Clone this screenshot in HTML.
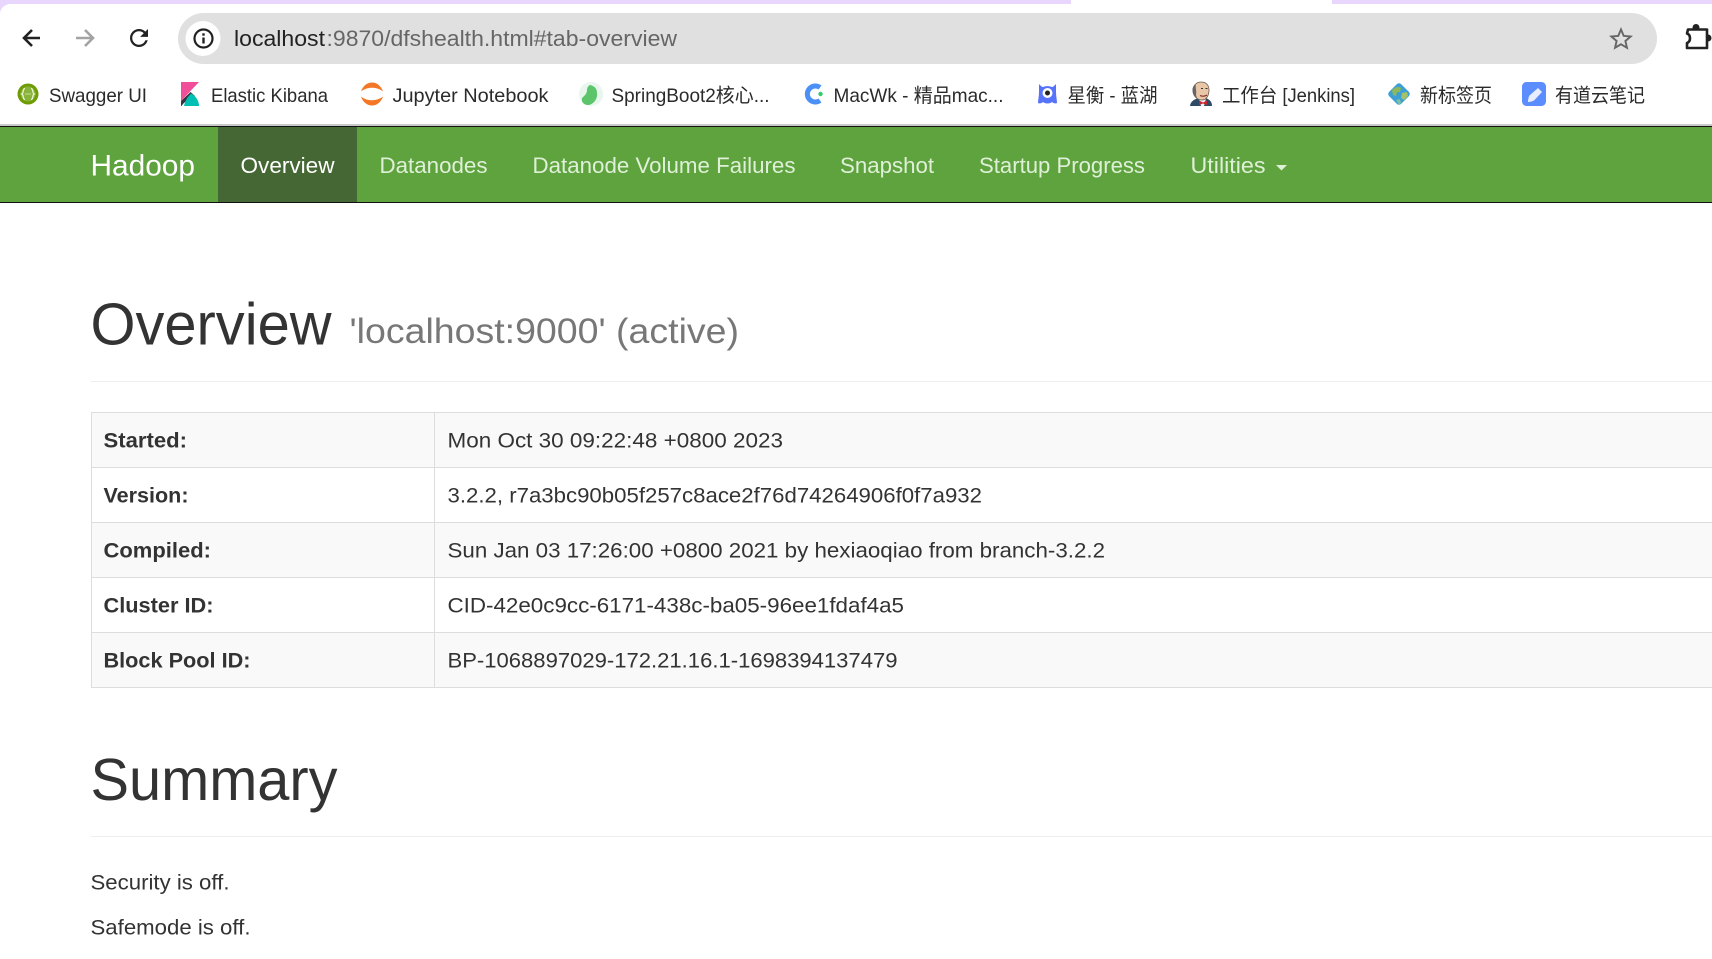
<!DOCTYPE html>
<html lang="en"><head><meta charset="utf-8"><title>Namenode information</title>
<style>
html,body{margin:0;padding:0;background:#fff;width:1712px;height:959px;overflow:hidden}
svg{display:block}
text{font-family:"Liberation Sans","Noto Sans CJK SC",sans-serif;fill:#333}
.bm{font-size:19.5px;fill:#2a2a2a}
.nav{font-size:22px;fill:#dff0d8}
.th{font-size:21px;font-weight:bold}
.td{font-size:21px}
.p{font-size:21.5px}
.h{font-size:59px}
</style></head><body>
<svg width="1712" height="959" viewBox="0 0 1712 959" xmlns="http://www.w3.org/2000/svg">
<!-- browser chrome -->
<rect x="0" y="0" width="1712" height="4" fill="#e8d6fc"/>
<rect x="1071" y="0" width="261" height="4" fill="#fff"/>
<rect x="0" y="4" width="12" height="10" fill="#e8d6fc"/>
<path d="M0 14C0 8 5 4 11 4H14V14Z" fill="#fff"/>
<rect x="0" y="124" width="1712" height="2" fill="#c9c9c9"/>
<path d="M40 38H24.5M32 30L24 38L32 46" fill="none" stroke="#222" stroke-width="2.6"/>
<path d="M76 38H92.5M85 30L93 38L85 46" fill="none" stroke="#a3a3a3" stroke-width="2.6"/>
<path transform="translate(125.5 24.5) scale(1.125)" fill="#222" d="M17.65 6.35C16.2 4.9 14.21 4 12 4c-4.42 0-7.99 3.58-7.99 8s3.57 8 7.99 8c3.73 0 6.84-2.55 7.73-6h-2.08c-.82 2.33-3.04 4-5.65 4-3.31 0-6-2.69-6-6s2.69-6 6-6c1.66 0 3.14.69 4.22 1.78L13 11h7V4l-2.35 2.35z"/>
<rect x="178" y="13" width="1479" height="51" rx="25.5" fill="#e0e0e0"/>
<circle cx="203" cy="38.5" r="17.5" fill="#fff"/>
<circle cx="203.5" cy="38.5" r="9" fill="none" stroke="#222" stroke-width="2.2"/>
<rect x="202.3" y="37.5" width="2.4" height="6" fill="#222"/><rect x="202.3" y="33.3" width="2.4" height="2.4" fill="#222"/>
<text x="234" y="46" font-size="22.5" style="fill:#222" textLength="91" lengthAdjust="spacingAndGlyphs">localhost</text>
<text x="326.5" y="46" font-size="22.5" style="fill:#666" textLength="350.5" lengthAdjust="spacingAndGlyphs">:9870/dfshealth.html#tab-overview</text>
<path transform="translate(1606.6 24.6) scale(1.2)" fill="#666" d="M22 9.24l-7.19-.62L12 2 9.19 8.63 2 9.24l5.46 4.73L5.82 21 12 17.27 18.18 21l-1.63-7.03L22 9.24zM12 15.4l-3.76 2.27 1-4.28-3.32-2.88 4.38-.38L12 6.1l1.71 4.04 4.38.38-3.32 2.88 1 4.28L12 15.4z"/>
<circle cx="1696" cy="27.500" r="3.500" fill="#222"/>
<circle cx="1708" cy="38" r="3.500" fill="#222"/>
<path d="M1688 29.500H1707V48H1687V43C1691 41.500 1691 35 1687 33.500Z" fill="#fff" stroke="#222" stroke-width="2.600" stroke-linejoin="round"/>

<!-- bookmark icons -->
<circle cx="28" cy="94" r="10.500" fill="#6e9c04"/>
<circle cx="28" cy="94" r="7.500" fill="#89b33a"/>
<path d="M25 88.500C22.500 88.500 24 93 21.800 94C24 95 22.500 99.500 25 99.500M31 88.500C33.500 88.500 32 93 34.200 94C32 95 33.500 99.500 31 99.500" fill="none" stroke="#eef5dc" stroke-width="1.300"/>
<path d="M25.500 94H30.500" stroke="#eef5dc" stroke-width="1.300" stroke-dasharray="1 1"/>

<path d="M181 82H199L181 101Z" fill="#f04e98"/>
<path d="M181 101L190.500 92L195 96C190 98 184 102 181.500 106H181Z" fill="#343741"/>
<path d="M184 106H199C199 101 196 96 191 93.500C187.500 97 185 101 184 106Z" fill="#00bfb3"/>

<path d="M361 91.500C365 79.500 379 79.500 383 91.500C377 86.500 367 86.500 361 91.500Z" fill="#f37726"/>
<path d="M361 96.500C367 101.500 377 101.500 383 96.500C379 108.500 365 108.500 361 96.500Z" fill="#f37726"/>

<circle cx="591" cy="94" r="12" fill="#e8f6ee"/>
<path d="M590 85C594 86 597 88 597 93C598 100 592 105 588 105C584 105 581 102 582 98C584 96 587 94 587 90C587 88 588 86 590 85Z" fill="#5cc46a"/>

<path d="M820 87.500A8 8 0 1 0 820 100.500" fill="none" stroke="#4a90f5" stroke-width="5"/>
<circle cx="820.500" cy="94" r="2.200" fill="#2ecb71"/>

<path d="M1039 84C1041 86 1042 87 1043 87C1046 85.800 1049 85.800 1052 87C1053 87 1054 86 1056 84C1056 88 1056 90 1056 92C1056 96 1057 100 1057 103C1055 104 1053 103 1052 102C1050 104 1045 104 1043 102C1042 103 1040 104 1038 103C1038 100 1039 96 1039 92C1039 90 1039 88 1039 84Z" fill="#5673fa"/>
<circle cx="1047.500" cy="93" r="5" fill="#fff"/><circle cx="1047.500" cy="93" r="2.500" fill="#222"/>

<path d="M1190 106C1190.500 102 1193 100 1197 98.500H1207C1210 100 1212 102 1212 106Z" fill="#2f4a66"/>
<path d="M1199 98.500H1206L1204 106H1201Z" fill="#f1f1f1"/>
<path d="M1199 100.500L1203 102.500L1207 100.500V105L1203 103.500L1199 105Z" fill="#c8262e"/>
<path d="M1193 90C1193 85 1197 82 1201 82C1206 82 1209 85 1209 90C1209 96 1206 100 1202 100C1197 100 1193 96 1193 90Z" fill="#e9c6a8" stroke="#6d5a4c" stroke-width="0.800"/>
<path d="M1192.500 90C1192.500 87 1194 85.500 1196 85C1195 88 1197 91 1196 95L1197 98C1194 97 1192.500 94 1192.500 90Z" fill="#666"/>
<path d="M1201 88.500h2M1205.500 88.500h2" stroke="#333" stroke-width="1.100"/>
<path d="M1200 95.500C1202 96.500 1205 96.500 1207 95" fill="none" stroke="#7a2b22" stroke-width="1.100"/>

<rect x="1390.500" y="85.500" width="17" height="17" rx="3" transform="rotate(45 1399 94)" fill="#3e9fd4"/>
<path d="M1392 90C1395 87 1399 86 1401 88L1400 92L1397 92L1396 96L1393 95Z" fill="#8fb85a"/>
<path d="M1402 93L1407 92L1408 96L1404 100L1401 98Z" fill="#a5c267"/>
<path d="M1396 100L1400 99L1401 103L1399 105Z" fill="#7cc0a8"/>

<rect x="1522" y="82" width="24" height="24" rx="4.500" fill="#5c8dff"/>
<path d="M1538 88L1542 92L1534 100.500C1532 101.500 1530 102 1528 102C1528 100 1528.500 97 1529.500 95.500Z" fill="#e8eeff"/>

<!-- bookmark labels -->
<text class="bm" x="49" y="102" textLength="98" lengthAdjust="spacingAndGlyphs">Swagger UI</text>
<text class="bm" x="211" y="102" textLength="117" lengthAdjust="spacingAndGlyphs">Elastic Kibana</text>
<text class="bm" x="392.500" y="102" textLength="156" lengthAdjust="spacingAndGlyphs">Jupyter Notebook</text>
<text class="bm" x="611.500" y="102" textLength="158" lengthAdjust="spacingAndGlyphs">SpringBoot2核心...</text>
<text class="bm" x="833.500" y="102" textLength="170" lengthAdjust="spacingAndGlyphs">MacWk - 精品mac...</text>
<text class="bm" x="1067.500" y="102" textLength="90" lengthAdjust="spacingAndGlyphs">星衡 - 蓝湖</text>
<text class="bm" x="1222" y="102" textLength="133" lengthAdjust="spacingAndGlyphs">工作台 [Jenkins]</text>
<text class="bm" x="1420" y="102" textLength="72" lengthAdjust="spacingAndGlyphs">新标签页</text>
<text class="bm" x="1555" y="102" textLength="90" lengthAdjust="spacingAndGlyphs">有道云笔记</text>

<!-- navbar -->
<rect x="0" y="126" width="1712" height="77" fill="#5fa33e"/>
<rect x="0" y="126" width="1712" height="1" fill="#111"/>
<rect x="0" y="202" width="1712" height="1" fill="#111"/>
<rect x="218" y="127" width="139" height="75" fill="#456733"/>
<text x="90.500" y="175.500" font-size="29.500" style="fill:#fff" textLength="104.500" lengthAdjust="spacingAndGlyphs">Hadoop</text>
<text class="nav" x="240.500" y="173" style="fill:#fff" textLength="94" lengthAdjust="spacingAndGlyphs">Overview</text>
<text class="nav" x="379.500" y="173" textLength="108" lengthAdjust="spacingAndGlyphs">Datanodes</text>
<text class="nav" x="532.500" y="173" textLength="263" lengthAdjust="spacingAndGlyphs">Datanode Volume Failures</text>
<text class="nav" x="840" y="173" textLength="94" lengthAdjust="spacingAndGlyphs">Snapshot</text>
<text class="nav" x="979" y="173" textLength="166" lengthAdjust="spacingAndGlyphs">Startup Progress</text>
<text class="nav" x="1190.500" y="173" textLength="75" lengthAdjust="spacingAndGlyphs">Utilities</text>
<path d="M1276 165H1287L1281.500 170.500Z" fill="#dff0d8"/>

<!-- page header -->
<text class="h" x="90.500" y="344.500" textLength="241" lengthAdjust="spacingAndGlyphs">Overview</text>
<text x="349.500" y="343" font-size="35" style="fill:#777" textLength="389.500" lengthAdjust="spacingAndGlyphs">'localhost:9000' (active)</text>
<rect x="91" y="381" width="1621" height="1" fill="#eee"/>

<!-- table -->
<rect x="91" y="412" width="1621" height="55" fill="#f9f9f9"/>
<rect x="91" y="522" width="1621" height="55" fill="#f9f9f9"/>
<rect x="91" y="632" width="1621" height="55" fill="#f9f9f9"/>
<g fill="#ddd">
<rect x="91" y="412" width="1621" height="1"/><rect x="91" y="467" width="1621" height="1"/><rect x="91" y="522" width="1621" height="1"/><rect x="91" y="577" width="1621" height="1"/><rect x="91" y="632" width="1621" height="1"/><rect x="91" y="687" width="1621" height="1"/>
<rect x="91" y="412" width="1" height="276"/><rect x="434" y="412" width="1" height="276"/>
</g>
<text class="th" x="103.500" y="447.500" textLength="83.500" lengthAdjust="spacingAndGlyphs">Started:</text>
<text class="td" x="447.500" y="447.500" textLength="335.500" lengthAdjust="spacingAndGlyphs">Mon Oct 30 09:22:48 +0800 2023</text>
<text class="th" x="103.500" y="502.500" textLength="85" lengthAdjust="spacingAndGlyphs">Version:</text>
<text class="td" x="447.500" y="502.500" textLength="534.500" lengthAdjust="spacingAndGlyphs">3.2.2, r7a3bc90b05f257c8ace2f76d74264906f0f7a932</text>
<text class="th" x="103.500" y="557.500" textLength="107.500" lengthAdjust="spacingAndGlyphs">Compiled:</text>
<text class="td" x="447.500" y="557.500" textLength="657.500" lengthAdjust="spacingAndGlyphs">Sun Jan 03 17:26:00 +0800 2021 by hexiaoqiao from branch-3.2.2</text>
<text class="th" x="103.500" y="612.500" textLength="110" lengthAdjust="spacingAndGlyphs">Cluster ID:</text>
<text class="td" x="447.500" y="612.500" textLength="456.500" lengthAdjust="spacingAndGlyphs">CID-42e0c9cc-6171-438c-ba05-96ee1fdaf4a5</text>
<text class="th" x="103.500" y="667.500" textLength="147" lengthAdjust="spacingAndGlyphs">Block Pool ID:</text>
<text class="td" x="447.500" y="667.500" textLength="450" lengthAdjust="spacingAndGlyphs">BP-1068897029-172.21.16.1-1698394137479</text>

<!-- summary -->
<text class="h" x="90.500" y="800" textLength="247" lengthAdjust="spacingAndGlyphs">Summary</text>
<rect x="91" y="836" width="1621" height="1" fill="#eee"/>
<text class="p" x="90.500" y="889.500" textLength="139" lengthAdjust="spacingAndGlyphs">Security is off.</text>
<text class="p" x="90.500" y="934.500" textLength="160" lengthAdjust="spacingAndGlyphs">Safemode is off.</text>
</svg>
</body></html>
